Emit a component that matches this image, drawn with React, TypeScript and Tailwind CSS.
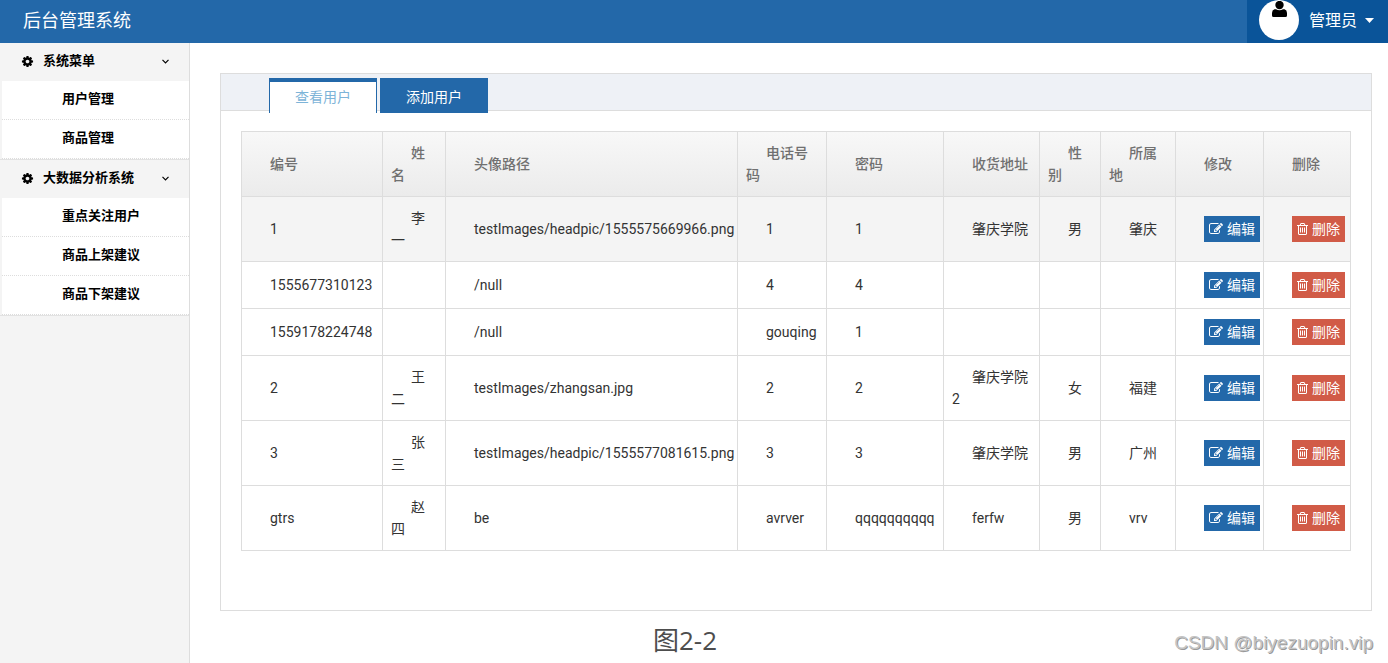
import type { ReactNode } from "react";

interface Usuario {
  id: string;
  name: string;
  headpic: string;
  phone: string;
  password: string;
  address: string;
  gender: string;
  region: string;
}

interface MenuGroup {
  title: string;
  items: string[];
}

const MENU: MenuGroup[] = [
  { title: "系统菜单", items: ["用户管理", "商品管理"] },
  {
    title: "大数据分析系统",
    items: ["重点关注用户", "商品上架建议", "商品下架建议"],
  },
];

const COLUMNS = [
  { label: "编号", width: "w-[141px]" },
  { label: "姓名", width: "w-[63px]" },
  { label: "头像路径", width: "w-[292px]" },
  { label: "电话号码", width: "w-[89px]" },
  { label: "密码", width: "w-[117px]" },
  { label: "收货地址", width: "w-[96px]" },
  { label: "性别", width: "w-[61px]" },
  { label: "所属地", width: "w-[75px]" },
  { label: "修改", width: "w-[88px]" },
  { label: "删除", width: "w-[87px]" },
];

const USERS: Usuario[] = [
  { id: "1", name: "李一", headpic: "testImages/headpic/1555575669966.png", phone: "1", password: "1", address: "肇庆学院", gender: "男", region: "肇庆" },
  { id: "1555677310123", name: "", headpic: "/null", phone: "4", password: "4", address: "", gender: "", region: "" },
  { id: "1559178224748", name: "", headpic: "/null", phone: "gouqing", password: "1", address: "", gender: "", region: "" },
  { id: "2", name: "王二", headpic: "testImages/zhangsan.jpg", phone: "2", password: "2", address: "肇庆学院2", gender: "女", region: "福建" },
  { id: "3", name: "张三", headpic: "testImages/headpic/1555577081615.png", phone: "3", password: "3", address: "肇庆学院", gender: "男", region: "广州" },
  { id: "gtrs", name: "赵四", headpic: "be", phone: "avrver", password: "qqqqqqqqqq", address: "ferfw", gender: "男", region: "vrv" },
];

const ICONS = {
  cog: "M1152 896q0-106-75-181t-181-75-181 75-75 181 75 181 181 75 181-75 75-181zm512-109v222q0 12-8 23t-20 13l-185 28q-19 54-39 91 35 50 107 138 10 12 10 25t-9 23q-27 37-99 108t-94 71q-12 0-26-9l-138-108q-44 23-91 38-16 136-29 186-7 28-36 28h-222q-14 0-24.5-8.5t-11.5-21.5l-28-184q-49-16-90-37l-141 107q-10 9-25 9-14 0-25-11-126-114-165-168-7-10-7-23 0-12 8-23 15-21 51-66.5t54-70.5q-27-50-41-99l-183-27q-13-2-21-12.5t-8-23.5v-222q0-12 8-23t19-13l186-28q14-46 39-92-40-57-107-138-10-12-10-24 0-10 9-23 26-36 98.5-107.5t94.5-71.5q13 0 26 10l138 107q44-23 91-38 16-136 29-186 7-28 36-28h222q14 0 24.5 8.5t11.5 21.5l28 184q49 16 90 37l142-107q9-9 24-9 13 0 25 10 129 119 165 170 7 8 7 22 0 12-8 23-15 21-51 66.5t-54 70.5q26 50 41 98l183 28q13 2 21 12.5t8 23.5z",
  edit: "M888 1184l116-116-152-152-116 116v56h96v96h56zm440-720q-16-16-33 1l-350 350q-17 17-1 33t33-1l350-350q17-17 1-33zm80 594v190q0 119-84.5 203.5t-203.5 84.5h-832q-119 0-203.5-84.5t-84.5-203.5v-832q0-119 84.5-203.5t203.5-84.5h832q63 0 117 25 15 7 18 23 3 17-9 29l-49 49q-14 14-32 8-23-6-45-6h-832q-66 0-113 47t-47 113v832q0 66 47 113t113 47h832q66 0 113-47t47-113v-126q0-13 9-22l64-64q15-15 35-7t20 29zm-96-738l288 288-672 672h-288v-288zm444 132l-92 92-288-288 92-92q28-28 68-28t68 28l152 152q28 28 28 68t-28 68z",
  trash: "M704 736v576q0 14-9 23t-23 9h-64q-14 0-23-9t-9-23v-576q0-14 9-23t23-9h64q14 0 23 9t9 23zm256 0v576q0 14-9 23t-23 9h-64q-14 0-23-9t-9-23v-576q0-14 9-23t23-9h64q14 0 23 9t9 23zm256 0v576q0 14-9 23t-23 9h-64q-14 0-23-9t-9-23v-576q0-14 9-23t23-9h64q14 0 23 9t9 23zm128 724v-948h-896v948q0 22 7 40.5t14.5 27 10.5 8.5h832q3 0 10.5-8.5t14.5-27 7-40.5zm-672-1076h448l-48-117q-7-9-17-11h-317q-10 2-17 11zm928 32v64q0 14-9 23t-23 9h-96v948q0 83-47 143.5t-113 60.5h-832q-66 0-113-58.5t-47-141.5v-952h-96q-14 0-23-9t-9-23v-64q0-14 9-23t23-9h309l70-167q15-37 54-63t79-26h320q40 0 79 26t54 63l70 167h309q14 0 23 9t9 23z",
};

function Icon({ name, viewBox = "0 0 1792 1792", className }: { name: keyof typeof ICONS; viewBox?: string; className: string }) {
  return (
    <svg viewBox={viewBox} className={className} fill="currentColor" aria-hidden="true">
      <path d={ICONS[name]} />
    </svg>
  );
}

function Header() {
  return (
    <header className="flex h-[43px] items-stretch justify-between bg-[#2368a9] text-white">
      <h1 className="pl-[23px] text-lg leading-10 font-normal">后台管理系统</h1>
      <button className="flex items-start bg-[#0a5499] pr-[14px] pl-3 cursor-pointer">
        <span className="flex size-10 justify-center rounded-full bg-white pt-px pl-px text-black">
          <svg viewBox="0 0 15 16" className="h-4 w-[15px]" fill="currentColor" aria-hidden="true">
            <circle cx="7.5" cy="4" r="4.2" />
            <path d="M2.500 8.200H4q3.500 2 7 0h1.500Q15 9 15 12v2.500Q15 16 13.500 16h-12Q0 16 0 14.500V12q0-3 2.500-3.800z" />
          </svg>
        </span>
        <span className="ml-[10px] text-base leading-10 font-normal">管理员</span>
        <svg viewBox="0 0 9 5" className="mt-[18px] ml-2 h-[5px] w-[9px]" fill="currentColor" aria-hidden="true">
          <path d="M0 0h9L4.500 5z" />
        </svg>
      </button>
    </header>
  );
}

function Sidebar() {
  return (
    <nav className="w-[190px] shrink-0 border-r border-[#ddd] bg-[#f4f4f4] text-[13px] font-bold text-black">
      {MENU.map((group) => (
        <section key={group.title} className="border-b border-[#e2e2e2]">
          <button className="flex h-[38px] w-full items-center pr-5 pb-0.5 pl-[21px] text-left cursor-pointer">
            <Icon name="cog" className="size-[13px]" />
            <span className="ml-[9px] flex-1">{group.title}</span>
            <svg viewBox="0 0 7 5" className="h-[5px] w-[7px]" fill="none" stroke="currentColor" strokeWidth="1.2" aria-hidden="true">
              <path d="M0.500 0.800l3 3 3-3" />
            </svg>
          </button>
          <ul className="pl-0.5">
            {group.items.map((item) => (
              <li key={item} className="border-b border-dotted border-[#ddd] bg-white">
                <a href="#" className="block pb-1 pl-[60px] leading-[34px]">
                  {item}
                </a>
              </li>
            ))}
          </ul>
        </section>
      ))}
    </nav>
  );
}

function Cell({ children }: { children?: ReactNode }) {
  return <td className="border border-[#ddd] px-2 py-[10px] indent-5">{children}</td>;
}

function UserTable() {
  return (
    <table className="w-full table-fixed border-collapse font-['Roboto','Noto_Sans_CJK_SC',sans-serif] text-sm leading-[22px] text-[#333]">
      <colgroup>
        {COLUMNS.map((col) => (
          <col key={col.label} className={col.width} />
        ))}
      </colgroup>
      <thead>
        <tr className="bg-linear-to-b from-[#f8f8f8] to-[#ebebeb] text-[#707070]">
          {COLUMNS.map((col) => (
            <th key={col.label} className="border border-[#ddd] px-2 py-[10px] text-left indent-5 font-medium">
              {col.label}
            </th>
          ))}
        </tr>
      </thead>
      <tbody>
        {USERS.map((user) => (
          <tr key={user.id} className="first:bg-[#f4f4f4]">
            <Cell>{user.id}</Cell>
            <Cell>{user.name}</Cell>
            <Cell>{user.headpic}</Cell>
            <Cell>{user.phone}</Cell>
            <Cell>{user.password}</Cell>
            <Cell>{user.address}</Cell>
            <Cell>{user.gender}</Cell>
            <Cell>{user.region}</Cell>
            <Cell>
              <button className="inline-flex h-[26px] items-center gap-1 bg-[#2368a9] px-[5px] align-top indent-0 whitespace-nowrap text-white cursor-pointer">
                <Icon name="edit" className="size-[14px]" />
                编辑
              </button>
            </Cell>
            <Cell>
              <button className="inline-flex h-[26px] items-center gap-1 bg-[#d15b47] px-[5px] align-top indent-0 whitespace-nowrap text-white cursor-pointer">
                <Icon name="trash" viewBox="192 128 1408 1536" className="h-3 w-[11px]" />
                删除
              </button>
            </Cell>
          </tr>
        ))}
      </tbody>
    </table>
  );
}

export default function App() {
  return (
    <div className="flex min-h-screen flex-col bg-white font-['Open_Sans','Noto_Sans_CJK_SC',sans-serif]">
      <Header />
      <div className="flex flex-1">
        <Sidebar />
        <main className="min-w-0 flex-1 pt-[30px] pr-4 pl-[30px]">
          <div className="min-h-[538px] border border-[#ddd]">
            <div className="flex h-[37px] items-start gap-[3px] border-b border-[#ddd] bg-[#eef1f6] pt-1 pl-12 text-sm">
              <button className="h-[35px] w-[108px] shrink-0 border-x border-t-4 border-[#2368a9] bg-white pb-0.5 text-[#7db4d8] cursor-pointer">
                查看用户
              </button>
              <button className="h-[35px] w-[108px] shrink-0 bg-[#2368a9] pt-0.5 text-white cursor-pointer">
                添加用户
              </button>
            </div>
            <div className="p-5">
              <UserTable />
            </div>
          </div>
          <footer className="flex justify-between pt-[11px] pl-[433px]">
            <p className="text-[26px] leading-9 text-[#4d4d4d]">图2-2</p>
            <p className="-mr-px pt-[5px] font-['Liberation_Sans',sans-serif] text-[19px] leading-8 text-[#c4c4c4] text-shadow-[1px_1px_0_#999]">
              CSDN @biyezuopin.vip
            </p>
          </footer>
        </main>
      </div>
    </div>
  );
}
